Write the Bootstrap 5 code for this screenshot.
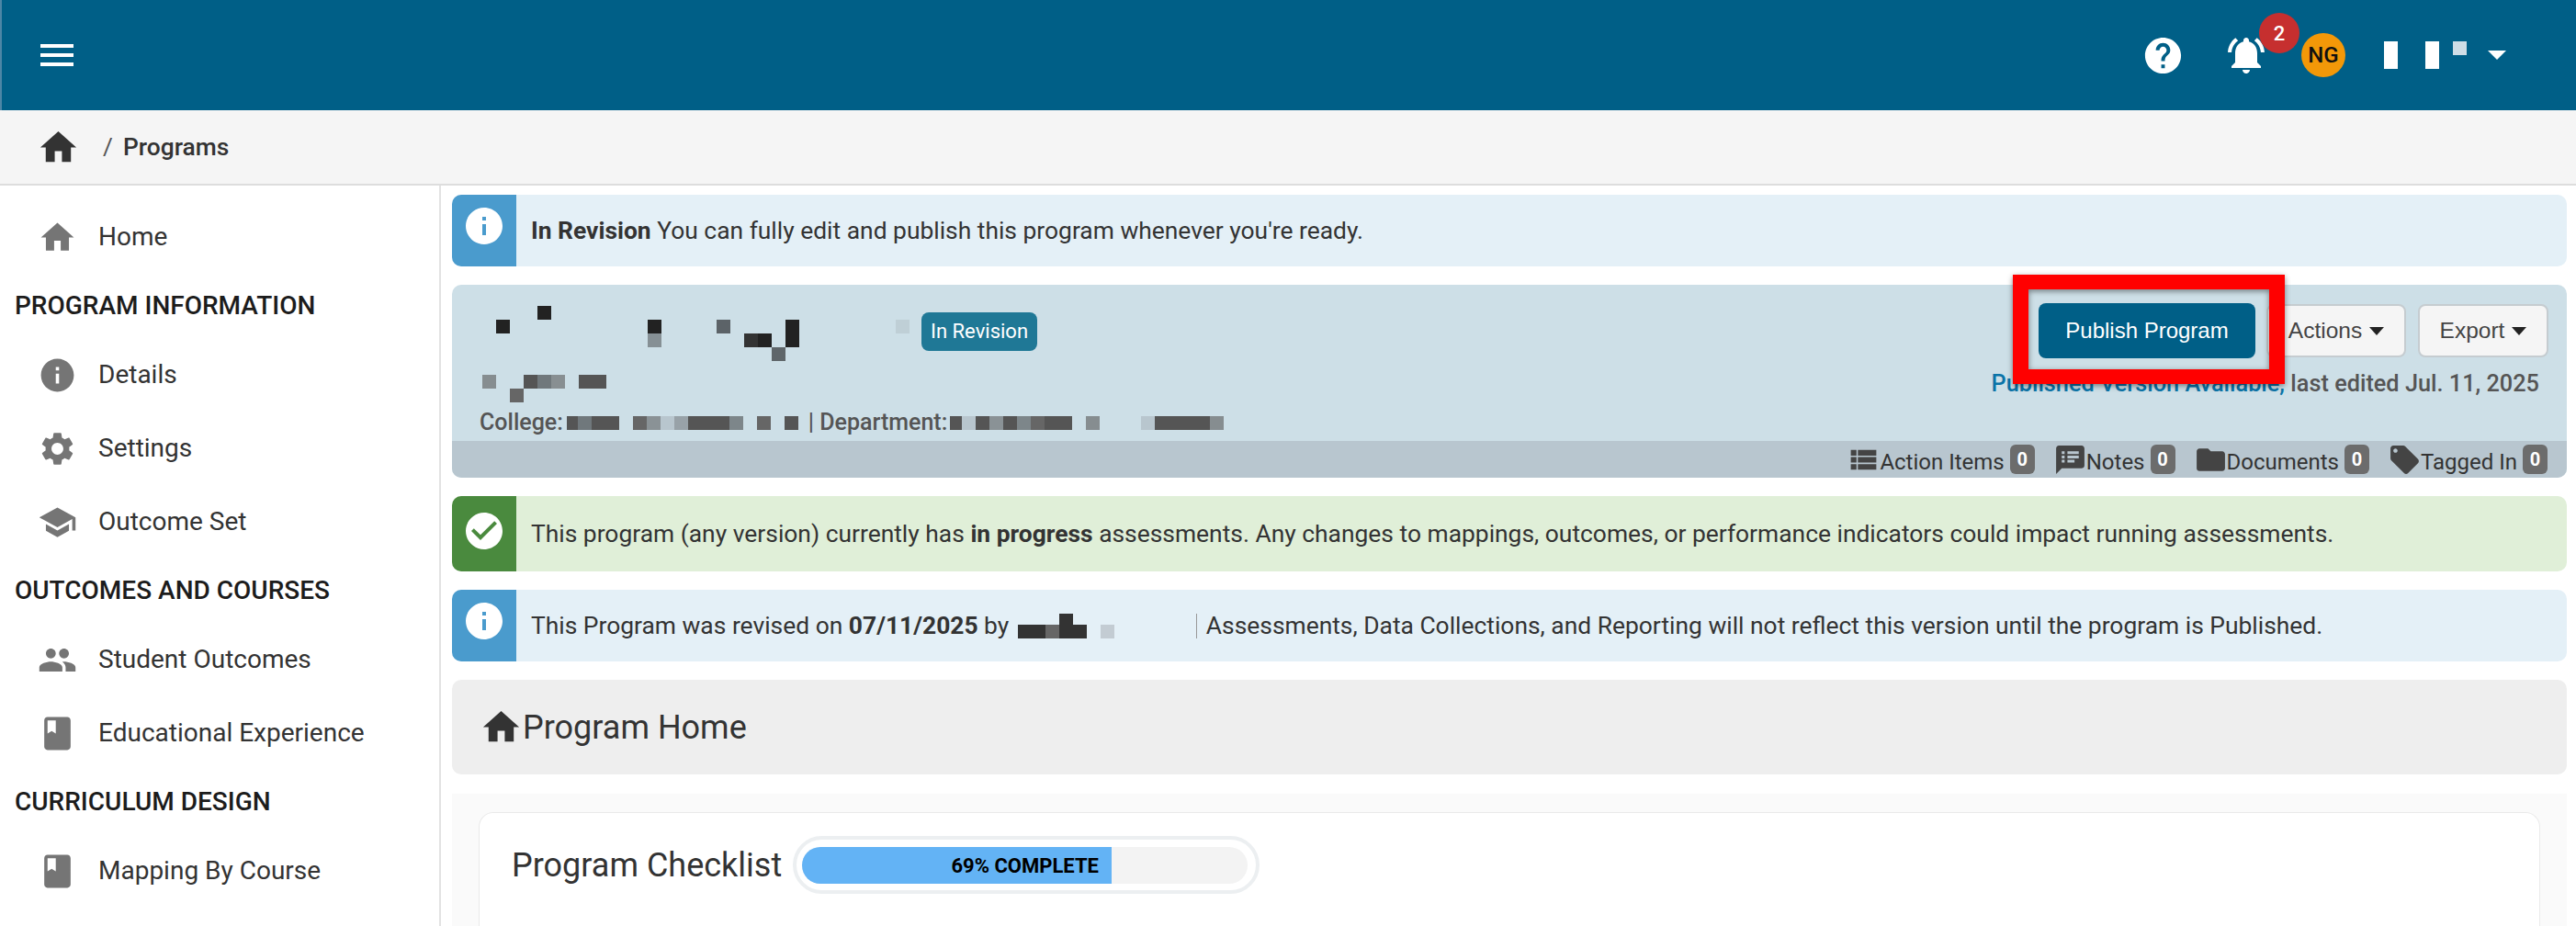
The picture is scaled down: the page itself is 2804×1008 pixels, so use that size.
<!DOCTYPE html>
<html lang="en">
<head>
<meta charset="utf-8">
<title>Programs</title>
<link rel="stylesheet" href="https://cdn.jsdelivr.net/npm/bootstrap@5.3.0/dist/css/bootstrap.min.css">
<style>
html,body{height:1008px;overflow:hidden;background:#fff;}
body{font-family:Roboto,"Liberation Sans",sans-serif;font-size:26.4px;color:#333;line-height:1.5;}
.ic{display:block;fill:currentColor;flex:none;}
.topbar{height:120px;background:#005f87;border-left:2px solid #4d86a6;padding:0 76px 0 42px;}
.burger{width:36px;height:24px;flex:none;}
.help{width:47px;height:47px;color:#fff;}
.bellwrap{width:48px;height:48px;color:#fff;margin-left:43px;position:relative;}
.redbadge{position:absolute;left:38px;top:-22px;width:44px;height:44px;border-radius:50%;background:#c62f2f;color:#fff;font-size:22px;font-weight:500;display:flex;align-items:center;justify-content:center;}
.avatar{width:48px;height:48px;border-radius:50%;background:#f39808;color:#111;font-size:24px;font-weight:500;display:flex;align-items:center;justify-content:center;margin-left:36px;}
.nm{margin-left:42px;margin-right:23px;}
.carett{width:20px;height:10px;}
.crumbs{height:82px;background:#f5f5f5;border-bottom:2px solid #ddd;padding-left:40px;padding-top:1px;font-size:26.4px;font-weight:500;color:#333;}
.crumbs svg{width:47px;height:47px;color:#333;}
.crumbs .sep{font-weight:400;color:#555;margin:0 11px 0 25px;}
.shell{height:806px;}
.side{width:480px;flex:none;border-right:2px solid #e2e2e2;background:#fff;padding-top:16px;}
.sideitem{height:80px;padding-left:41px;color:#333;text-decoration:none;font-size:28px;}
.sideitem svg{width:43px;height:43px;color:#757575;margin-right:23px;}
.sidehead{height:70px;padding-left:16px;font-size:28px;font-weight:500;color:#1c1c1c;}
.mainp{flex:1;min-width:0;padding:10px 10px 0 12px;}
.bar{display:flex;border-radius:10px;overflow:hidden;margin:0 0 20px;padding:0;border:0;font-size:26.4px;color:#333;}
.bar .stub{width:70px;flex:none;display:flex;justify-content:center;padding-top:10px;color:#fff;}
.stub svg{width:48px;height:48px;}
.bar .msg{padding:1px 0 0 16px;display:flex;align-items:center;flex:1;white-space:pre;}
.barinfo{background:#e4f0f7;}
.barinfo .stub{background:#4a9bcd;}
.barok{background:#e0efd8;}
.barok .stub{background:#4a8a3e;padding-top:14px;}
.h78{height:78px;}
.h82{height:82px;}
.prog{position:relative;height:210px;background:#cddfe7;border-radius:10px;margin-bottom:20px;border:0;}
.progtop{height:170px;}
.pl{padding:23px 0 0 30px;}
.inrev{background:#1f7896;color:#fff;font-size:22px;font-weight:400;border-radius:8px;height:42px;width:126px;padding:0;display:flex;align-items:center;justify-content:center;margin:7px 0 0 13px;}
.ml0{margin-top:15px;}
.collegeline{margin-top:7px;height:30px;font-size:25px;font-weight:500;color:#555;white-space:pre;}
.pr{padding:20px 20px 0 0;}
.hbtn{font-family:"Liberation Sans",Arial,sans-serif;font-size:24.5px;height:58px;padding:0;border-radius:8px;background:#f5f5f5;border:2px solid #c5ccd0;color:#444;display:flex;align-items:center;justify-content:center;gap:8px;}
.hbtn::after{content:"";border-top:9px solid #222;border-left:8px solid transparent;border-right:8px solid transparent;}
.pubbtn{font-family:"Liberation Sans",Arial,sans-serif;font-size:24px;width:236px;height:60px;background:#005f87;border:0;border-radius:8px;color:#fff;padding:0;}
.pubbtn:hover{background:#005f87;color:#fff;}
.w152{width:152px;margin-left:12px;}
.w142{width:142px;margin-left:13px;}
.lastedit{margin:13px 10px 0 0;font-size:25.3px;font-weight:500;color:#555;text-align:right;line-height:30px;white-space:pre;}
.lastedit a{color:#0b74a8;text-decoration:none;}
.redbox{position:absolute;left:1699px;top:-11px;width:296px;height:119px;border:solid #f00;border-width:16px 17px;box-shadow:0 2px 6px rgba(0,0,0,.45),inset 0 2px 6px rgba(0,0,0,.45);pointer-events:none;}
.progfoot{height:40px;background:#b8c6cf;padding-right:21px;font-size:24px;color:#333;border-radius:0 0 10px 10px;}
.progfoot svg{width:37px;height:37px;color:#444;margin:0 -1px 0 20px;}
.progfoot .ft{padding-top:5px;}
.progfoot span.cnt{background:#6c6c6c;color:#fff;font-size:20px;font-weight:700;width:27px;height:32px;border-radius:6px;display:flex;align-items:center;justify-content:center;margin-left:6px;padding:0;}
.pagehead{height:103px;background:#eee;border-radius:10px;margin-bottom:21px;padding-left:30px;font-size:36px;font-weight:400;color:#333;}
.pagehead svg{width:47px;height:47px;color:#333;margin-right:0;}
.panelp{background:#fafafa;height:144px;padding:20px 29px 0;overflow:hidden;}
.chk{background:#fff;border:1px solid #eaeaea;border-bottom:0;border-radius:16px 16px 0 0;height:124px;padding:25px 0 0 35px;}
.chk h2{font-size:36px;font-weight:400;color:#333;margin:0 12px 0 0;line-height:56px;}
.pillout{width:508px;height:63px;border:4px solid #eceff1;border-radius:32px;padding:8px 9px 8px 6px;background:#fff;}
.pillbar{position:relative;height:40px;border-radius:20px;background:#f3f3f3;}
.pillbar .progress-bar{background:#63b3f5;}
.pilllabel{position:absolute;inset:0;display:flex;align-items:center;justify-content:center;font-size:22px;font-weight:700;color:#000;}
</style>
</head>
<body>
<svg width="0" height="0" class="position-absolute">
<defs>
<symbol id="i-home" viewBox="0 0 24 24"><path d="M10 20v-6h4v6h5v-8h3L12 3 2 12h3v8z"/></symbol>
<symbol id="i-info" viewBox="0 0 24 24"><path d="M12 2C6.48 2 2 6.48 2 12s4.48 10 10 10 10-4.48 10-10S17.52 2 12 2zm1 15h-2v-6h2v6zm0-8h-2V7h2v2z"/></symbol>
<symbol id="i-gear" viewBox="0 0 24 24"><path d="M19.14 12.94c.04-.3.06-.61.06-.94 0-.32-.02-.64-.07-.94l2.03-1.58c.18-.14.23-.41.12-.61l-1.92-3.32c-.12-.22-.37-.29-.59-.22l-2.39.96c-.5-.38-1.03-.7-1.62-.94l-.36-2.54c-.04-.24-.24-.41-.48-.41h-3.84c-.24 0-.43.17-.47.41l-.36 2.54c-.59.24-1.13.57-1.62.94l-2.39-.96c-.22-.08-.47 0-.59.22L2.74 8.87c-.12.21-.08.47.12.61l2.03 1.58c-.05.3-.09.63-.09.94s.02.64.07.94l-2.03 1.58c-.18.14-.23.41-.12.61l1.92 3.32c.12.22.37.29.59.22l2.39-.96c.5.38 1.03.7 1.62.94l.36 2.54c.05.24.24.41.48.41h3.84c.24 0 .44-.17.47-.41l.36-2.54c.59-.24 1.13-.56 1.62-.94l2.39.96c.22.08.47 0 .59-.22l1.92-3.32c.12-.22.07-.47-.12-.61l-2.01-1.58zM12 15.6c-1.98 0-3.6-1.62-3.6-3.6s1.62-3.6 3.6-3.6 3.6 1.62 3.6 3.6-1.62 3.6-3.6 3.6z"/></symbol>
<symbol id="i-school" viewBox="0 0 24 24"><path d="M5 13.18v4L12 21l7-3.82v-4L12 17l-7-3.82zM12 3L1 9l11 6 9-4.91V17h2V9L12 3z"/></symbol>
<symbol id="i-people" viewBox="0 0 24 24"><path d="M16 11c1.66 0 2.99-1.34 2.99-3S17.66 5 16 5c-1.66 0-3 1.34-3 3s1.34 3 3 3zm-8 0c1.66 0 2.99-1.34 2.99-3S9.66 5 8 5C6.34 5 5 6.34 5 8s1.34 3 3 3zm0 2c-2.33 0-7 1.17-7 3.5V19h14v-2.5c0-2.33-4.67-3.5-7-3.5zm8 0c-.29 0-.62.02-.97.05 1.16.84 1.97 1.97 1.97 3.45V19h6v-2.5c0-2.33-4.67-3.5-7-3.5z"/></symbol>
<symbol id="i-book" viewBox="0 0 24 24"><path d="M18 2H6c-1.1 0-2 .9-2 2v16c0 1.1.9 2 2 2h12c1.1 0 2-.9 2-2V4c0-1.1-.9-2-2-2zM6 4h5v8l-2.5-1.5L6 12V4z"/></symbol>
<symbol id="i-help" viewBox="0 0 24 24"><path d="M12 2C6.48 2 2 6.48 2 12s4.48 10 10 10 10-4.48 10-10S17.52 2 12 2zm1 17h-2v-2h2v2zm2.07-7.75l-.9.92C13.45 12.9 13 13.5 13 15h-2v-.5c0-1.1.45-2.1 1.17-2.83l1.24-1.26c.37-.36.59-.86.59-1.41 0-1.1-.9-2-2-2s-2 .9-2 2H8c0-2.21 1.79-4 4-4s4 1.79 4 4c0 .88-.36 1.68-.93 2.25z"/></symbol>
<symbol id="i-bell" viewBox="0 0 24 24"><path d="M7.58 4.08L6.15 2.65C3.75 4.48 2.17 7.3 2.03 10.5h2c.15-2.65 1.51-4.97 3.55-6.42zm12.39 6.42h2c-.15-3.2-1.73-6.02-4.12-7.85l-1.42 1.43c2.02 1.45 3.39 3.77 3.54 6.42zM18 11c0-3.07-1.64-5.64-4.5-6.32V4c0-.83-.67-1.5-1.5-1.5s-1.5.67-1.5 1.5v.68C7.63 5.36 6 7.92 6 11v5l-2 2v1h16v-1l-2-2v-5zm-6 11c.14 0 .27-.01.4-.04.65-.14 1.18-.58 1.44-1.18.1-.24.15-.5.15-.78h-4c.01 1.1.9 2 2.01 2z"/></symbol>
<symbol id="i-check" viewBox="0 0 24 24"><path fill-rule="evenodd" d="M12 2C6.48 2 2 6.48 2 12s4.48 10 10 10 10-4.48 10-10S17.52 2 12 2zm-2 15l-5-5 1.41-1.41L10 14.17l7.59-7.59L19 8l-9 9z"/></symbol>
<symbol id="i-list" viewBox="0 0 24 24"><path d="M3 14h4v-4H3v4zm0 5h4v-4H3v4zM3 9h4V5H3v4zm5 5h13v-4H8v4zm0 5h13v-4H8v4zM8 5v4h13V5H8z"/></symbol>
<symbol id="i-note" viewBox="0 0 24 24"><path d="M20 2H4c-1.1 0-1.99.9-1.99 2L2 22l4-4h14c1.1 0 2-.9 2-2V4c0-1.1-.9-2-2-2zM8 14H6v-2h2v2zm0-3H6V9h2v2zm0-3H6V6h2v2zm7 6h-5v-2h5v2zm3-3h-8V9h8v2zm0-3h-8V6h8v2z"/></symbol>
<symbol id="i-folder" viewBox="0 0 24 24"><path d="M10 4H4c-1.1 0-1.99.9-1.99 2L2 18c0 1.1.9 2 2 2h16c1.1 0 2-.9 2-2V8c0-1.1-.9-2-2-2h-8l-2-2z"/></symbol>
<symbol id="i-tag" viewBox="0 0 24 24"><path d="M21.41 11.58l-9-9C12.05 2.22 11.55 2 11 2H4c-1.1 0-2 .9-2 2v7c0 .55.22 1.05.59 1.42l9 9c.36.36.86.58 1.41.58.55 0 1.05-.22 1.41-.59l7-7c.37-.36.59-.86.59-1.41 0-.55-.23-1.06-.59-1.42zM5.5 7C4.67 7 4 6.33 4 5.5S4.67 4 5.5 4 7 4.67 7 5.5 6.33 7 5.5 7z"/></symbol>
</defs>
</svg>

<nav class="navbar topbar d-flex align-items-center justify-content-between flex-nowrap">
  <svg class="ic burger" viewBox="0 0 36 24"><rect width="36" height="4" fill="#fff"/><rect y="10" width="36" height="4" fill="#fff"/><rect y="20" width="36" height="4" fill="#fff"/></svg>
  <div class="d-flex align-items-center">
    <svg class="ic help"><use href="#i-help"/></svg>
    <div class="bellwrap"><svg class="ic" width="48" height="48"><use href="#i-bell"/></svg><span class="redbadge">2</span></div>
    <span class="avatar">NG</span>
    <svg class="nm" width="90" height="30" viewBox="0 0 90 30"><rect width="15" height="30" fill="#fff"/><rect x="45" width="15" height="30" fill="#fff"/><rect x="75" width="15" height="15" fill="#cfdde6"/></svg>
    <svg class="carett" viewBox="0 0 20 10"><path d="M0 0h20L10 10z" fill="#fff"/></svg>
  </div>
</nav>

<nav class="crumbs d-flex align-items-center" aria-label="breadcrumb">
  <svg class="ic"><use href="#i-home"/></svg>
  <span class="sep">/</span><span>Programs</span>
</nav>

<div class="shell d-flex">
  <aside class="side">
    <div class="sideitem d-flex align-items-center"><svg class="ic"><use href="#i-home"/></svg>Home</div>
    <div class="sidehead d-flex align-items-center">PROGRAM INFORMATION</div>
    <div class="sideitem d-flex align-items-center"><svg class="ic"><use href="#i-info"/></svg>Details</div>
    <div class="sideitem d-flex align-items-center"><svg class="ic"><use href="#i-gear"/></svg>Settings</div>
    <div class="sideitem d-flex align-items-center"><svg class="ic"><use href="#i-school"/></svg>Outcome Set</div>
    <div class="sidehead d-flex align-items-center">OUTCOMES AND COURSES</div>
    <div class="sideitem d-flex align-items-center"><svg class="ic"><use href="#i-people"/></svg>Student Outcomes</div>
    <div class="sideitem d-flex align-items-center"><svg class="ic"><use href="#i-book"/></svg>Educational Experience</div>
    <div class="sidehead d-flex align-items-center">CURRICULUM DESIGN</div>
    <div class="sideitem d-flex align-items-center"><svg class="ic"><use href="#i-book"/></svg>Mapping By Course</div>
  </aside>

  <main class="mainp">
    <div class="bar barinfo h78">
      <div class="stub"><svg class="ic"><use href="#i-info"/></svg></div>
      <div class="msg"><span><b class="fw-bold">In Revision</b> You can fully edit and publish this program whenever you're ready.</span></div>
    </div>

    <section class="prog">
      <div class="progtop d-flex justify-content-between">
        <div class="pl">
          <div class="d-flex">
            <svg class="ic" width="468" height="60" viewBox="522 333 468 60">
              <rect x="540" y="348" width="15" height="15" fill="#222"/><rect x="585" y="333" width="15" height="15" fill="#222"/>
              <rect x="705" y="348" width="15" height="15" fill="#222"/><rect x="705" y="363" width="15" height="15" fill="#869095"/>
              <rect x="780" y="348" width="15" height="15" fill="#5c6368"/><rect x="810" y="363" width="15" height="15" fill="#333"/>
              <rect x="825" y="363" width="15" height="15" fill="#222"/><rect x="840" y="378" width="15" height="15" fill="#5f666a"/>
              <rect x="855" y="348" width="15" height="30" fill="#222"/><rect x="975" y="348" width="15" height="15" fill="#bfcfd6"/>
            </svg>
            <span class="badge inrev">In Revision</span>
          </div>
          <svg class="ic ml0" width="140" height="30" viewBox="522 408 140 30">
            <rect x="525" y="408" width="15" height="15" fill="#868d90"/><rect x="570" y="408" width="15" height="15" fill="#555"/>
            <rect x="585" y="408" width="15" height="15" fill="#70787c"/><rect x="600" y="408" width="15" height="15" fill="#888f92"/>
            <rect x="630" y="408" width="30" height="15" fill="#555"/><rect x="555" y="423" width="15" height="15" fill="#666"/>
          </svg>
          <div class="collegeline d-flex align-items-center">
            <span>College:</span>
            <svg class="ic" width="255" height="15" viewBox="618 453 255 15" style="margin-left:4px">
              <rect x="618" y="453" width="12" height="15" fill="#555"/><rect x="630" y="453" width="15" height="15" fill="#70787c"/>
              <rect x="645" y="453" width="30" height="15" fill="#555"/><rect x="690" y="453" width="15" height="15" fill="#666"/>
              <rect x="705" y="453" width="15" height="15" fill="#8a9296"/><rect x="720" y="453" width="15" height="15" fill="#b8c6ce"/>
              <rect x="735" y="453" width="15" height="15" fill="#98a2a8"/><rect x="750" y="453" width="45" height="15" fill="#555"/>
              <rect x="795" y="453" width="15" height="15" fill="#7d868a"/><rect x="825" y="453" width="15" height="15" fill="#666"/>
              <rect x="855" y="453" width="15" height="15" fill="#555"/>
            </svg>
            <span style="margin-left:8px">| Department:</span>
            <svg class="ic" width="298" height="15" viewBox="1037 453 298 15" style="margin-left:3px">
              <rect x="1037" y="453" width="13" height="15" fill="#555"/><rect x="1050" y="453" width="15" height="15" fill="#b8c6ce"/>
              <rect x="1065" y="453" width="15" height="15" fill="#555"/><rect x="1080" y="453" width="15" height="15" fill="#8a9296"/>
              <rect x="1095" y="453" width="15" height="15" fill="#555"/><rect x="1110" y="453" width="15" height="15" fill="#7d868a"/>
              <rect x="1125" y="453" width="15" height="15" fill="#666"/><rect x="1140" y="453" width="30" height="15" fill="#555"/>
              <rect x="1185" y="453" width="15" height="15" fill="#868d90"/><rect x="1245" y="453" width="15" height="15" fill="#b8c6ce"/>
              <rect x="1260" y="453" width="60" height="15" fill="#555"/><rect x="1320" y="453" width="15" height="15" fill="#868d90"/>
            </svg>
          </div>
        </div>
        <div class="pr">
          <div class="d-flex align-items-center justify-content-end">
            <button type="button" class="btn pubbtn">Publish Program</button>
            <button type="button" class="btn hbtn w152">Actions</button>
            <button type="button" class="btn hbtn w142">Export</button>
          </div>
          <div class="lastedit"><a href="#">Published Version Available,</a> last edited Jul. 11, 2025</div>
        </div>
      </div>
      <div class="progfoot d-flex align-items-center justify-content-end">
        <svg class="ic"><use href="#i-list"/></svg><span class="ft">Action Items</span><span class="cnt">0</span>
        <svg class="ic"><use href="#i-note"/></svg><span class="ft">Notes</span><span class="cnt">0</span>
        <svg class="ic"><use href="#i-folder"/></svg><span class="ft">Documents</span><span class="cnt">0</span>
        <svg class="ic"><use href="#i-tag"/></svg><span class="ft">Tagged In</span><span class="cnt">0</span>
      </div>
      <div class="redbox"></div>
    </section>

    <div class="bar barok h82">
      <div class="stub"><svg class="ic"><use href="#i-check"/></svg></div>
      <div class="msg"><span>This program (any version) currently has <b class="fw-bold">in progress</b> assessments. Any changes to mappings, outcomes, or performance indicators could impact running assessments.</span></div>
    </div>

    <div class="bar barinfo h78">
      <div class="stub"><svg class="ic"><use href="#i-info"/></svg></div>
      <div class="msg"><span>This Program was revised on <b class="fw-bold">07/11/2025</b> by </span>
        <svg class="ic" width="195" height="27" viewBox="1110 666 195 27" style="margin-left:3px">
          <rect x="1110" y="678" width="30" height="15" fill="#333"/><rect x="1140" y="678" width="15" height="15" fill="#666"/>
          <rect x="1155" y="666" width="15" height="27" fill="#333"/><rect x="1170" y="678" width="15" height="15" fill="#333"/>
          <rect x="1200" y="678" width="15" height="15" fill="#c3ccd3"/><rect x="1304" y="666" width="1" height="27" fill="#999"/>
        </svg>
        <span style="margin-left:10px">Assessments, Data Collections, and Reporting will not reflect this version until the program is Published.</span></div>
    </div>

    <div class="pagehead d-flex align-items-center">
      <svg class="ic"><use href="#i-home"/></svg><span>Program Home</span>
    </div>

    <div class="panelp">
      <div class="chk">
        <div class="d-flex align-items-center">
          <h2>Program Checklist</h2>
          <div class="pillout">
            <div class="progress pillbar" role="progressbar" aria-valuenow="69" aria-valuemin="0" aria-valuemax="100">
              <div class="progress-bar" style="width:69.4%"></div>
              <div class="pilllabel">69% COMPLETE</div>
            </div>
          </div>
        </div>
      </div>
    </div>
  </main>
</div>
</body>
</html>
